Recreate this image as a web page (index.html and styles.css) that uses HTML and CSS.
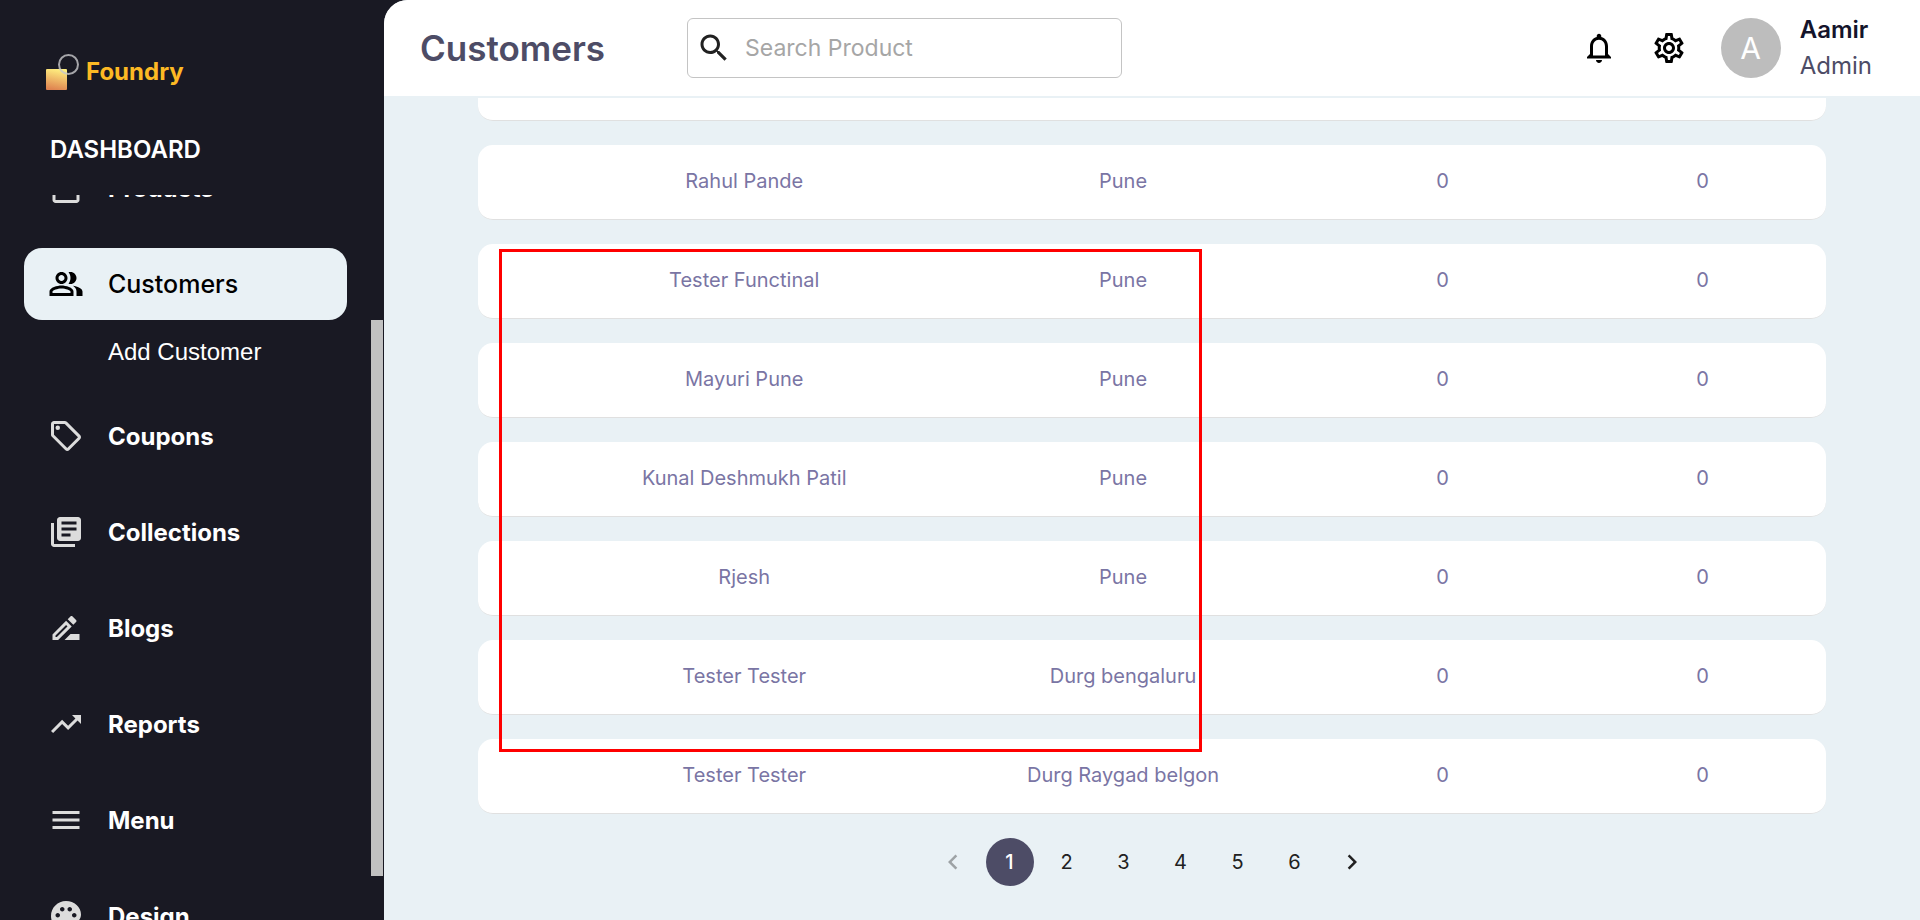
FILE: index.html
```html
<!DOCTYPE html>
<html lang="en">
<head>
<meta charset="utf-8">
<title>Customers</title>
<link rel="stylesheet" href="styles.css">
</head>
<body>
<div class="app">
  <aside class="sidebar">
    <a class="brand" href="#">
      <svg class="brand-mark" viewBox="0 0 36 38" aria-hidden="true">
        <defs><linearGradient id="g" x1="0.6" y1="0" x2="0.4" y2="1"><stop offset="0" stop-color="#fff080"/><stop offset="1" stop-color="#df8350"/></linearGradient></defs>
        <rect x="0" y="16" width="21" height="21" rx="1" fill="url(#g)"/>
        <circle cx="22.5" cy="11.5" r="9.5" fill="none" stroke="#c8c8ca" stroke-opacity="0.8" stroke-width="2"/>
      </svg>
      <span>Foundry</span>
    </a>
    <h2 class="side-title">DASHBOARD</h2>
    <div class="nav-scroller">
      <nav class="nav">
        <a class="nav-item" href="#"><svg class="icon" viewBox="0 0 24 24"><path d="M20 2H4c-1 0-2 .9-2 2v3.01c0 .72.43 1.34 1 1.69V20c0 1.1 1.1 2 2 2h14c.9 0 2-.9 2-2V8.7c.57-.35 1-.97 1-1.69V4c0-1.1-1-2-2-2zm-1 18H5V9h14v11zm1-13H4V4h16v3z"/><path d="M9 12h6v2H9z"/></svg><span>Products</span></a>
        <div class="nav-group">
          <a class="nav-item active" href="#"><svg class="icon" viewBox="0 0 24 24"><path d="M16.67 13.13C18.04 14.06 19 15.32 19 17v3h4v-3c0-2.18-3.57-3.47-6.33-3.87zM15 12c2.21 0 4-1.79 4-4s-1.79-4-4-4c-.47 0-.91.1-1.33.24C14.5 5.27 15 6.58 15 8s-.5 2.73-1.33 3.76c.42.14.86.24 1.33.24zM9 12c2.21 0 4-1.79 4-4s-1.79-4-4-4-4 1.79-4 4 1.79 4 4 4zm0-6c1.1 0 2 .9 2 2s-.9 2-2 2-2-.9-2-2 .9-2 2-2zM9 13c-2.67 0-8 1.34-8 4v3h16v-3c0-2.66-5.33-4-8-4zm6 5H3v-.99C3.2 16.29 6.3 15 9 15s5.8 1.29 6 2v1z"/></svg><span>Customers</span></a>
          <a class="sub-item" href="#">Add Customer</a>
        </div>
        <a class="nav-item" href="#"><svg class="icon" viewBox="0 0 24 24"><path d="M21.41 11.41l-8.83-8.83c-.37-.37-.88-.58-1.41-.58H4c-1.1 0-2 .9-2 2v7.17c0 .53.21 1.04.59 1.41l8.83 8.83c.78.78 2.05.78 2.83 0l7.17-7.17c.78-.78.78-2.04-.01-2.83zM12.83 20L4 11.17V4h7.17L20 12.83 12.83 20z"/><circle cx="6.5" cy="6.5" r="1.5"/></svg><span>Coupons</span></a>
        <a class="nav-item" href="#"><svg class="icon" viewBox="0 0 24 24"><path d="M4 6H2v14c0 1.1.9 2 2 2h14v-2H4V6zm16-4H8c-1.1 0-2 .9-2 2v12c0 1.1.9 2 2 2h12c1.1 0 2-.9 2-2V4c0-1.1-.9-2-2-2zm-1 9H9V9h10v2zm-4 4H9v-2h6v2zm4-8H9V5h10v2z"/></svg><span>Collections</span></a>
        <a class="nav-item" href="#"><svg class="icon" viewBox="0 0 24 24"><path d="M15 16l-4 4h10v-4zM12.06 7.19L3 16.25V20h3.75l9.06-9.06-3.75-3.75zM5.92 18H5v-.92l7.06-7.06.92.92L5.92 18zM18.71 8.04c.39-.39.39-1.02 0-1.41l-2.34-2.34c-.2-.2-.45-.29-.71-.29s-.51.1-.7.29l-1.83 1.83 3.75 3.75 1.83-1.83z"/></svg><span>Blogs</span></a>
        <a class="nav-item" href="#"><svg class="icon" viewBox="0 0 24 24"><path d="M16 6l2.29 2.29-4.88 4.88-4-4L2 16.59 3.41 18l6-6 4 4 6.3-6.29L22 12V6z"/></svg><span>Reports</span></a>
        <a class="nav-item" href="#"><svg class="icon" viewBox="0 0 24 24"><path d="M3 18h18v-2H3v2zm0-5h18v-2H3v2zm0-7v2h18V6H3z"/></svg><span>Menu</span></a>
        <a class="nav-item" href="#"><svg class="icon" viewBox="0 0 24 24"><path d="M12 2C6.49 2 2 6.49 2 12s4.49 10 10 10c1.38 0 2.5-1.12 2.5-2.5 0-.61-.23-1.2-.64-1.67-.08-.1-.13-.21-.13-.33 0-.28.22-.5.5-.5H16c3.31 0 6-2.69 6-6 0-4.96-4.49-9-10-9zm5.5 11c-.83 0-1.5-.67-1.5-1.5s.67-1.5 1.5-1.5 1.5.67 1.5 1.5-.67 1.5-1.5 1.5zm-3-4c-.83 0-1.5-.67-1.5-1.5S13.67 6 14.5 6s1.5.67 1.5 1.5S15.33 9 14.5 9zM5 11.5c0-.83.67-1.5 1.5-1.5s1.5.67 1.5 1.5S7.33 13 6.5 13 5 12.33 5 11.5zm6-4c0 .83-.67 1.5-1.5 1.5S8 8.33 8 7.5 8.67 6 9.5 6s1.5.67 1.5 1.5z"/></svg><span>Design</span></a>
      </nav>
      <div class="scroll-track"><div class="scroll-thumb"></div></div>
    </div>
  </aside>

  <main class="main">
    <header class="topbar">
      <h1 class="page-title">Customers</h1>
      <label class="search">
        <svg class="icon" viewBox="0 0 24 24" aria-hidden="true"><path d="M15.5 14h-.79l-.28-.27C15.41 12.59 16 11.11 16 9.5 16 5.91 13.09 3 9.5 3S3 5.91 3 9.5 5.91 16 9.5 16c1.61 0 3.09-.59 4.23-1.57l.27.28v.79l5 4.99L20.49 19l-4.99-5zm-6 0C7.01 14 5 11.99 5 9.5S7.01 5 9.5 5 14 7.01 14 9.5 11.99 14 9.5 14z"/></svg>
        <input class="search-input" type="text" placeholder="Search Product" aria-label="Search Product">
      </label>
      <div class="tools">
        <button class="icon-button" type="button" aria-label="Notifications"><svg class="icon" viewBox="0 0 24 24"><path d="M12 22c1.1 0 2-.9 2-2h-4c0 1.1.9 2 2 2zm6-6v-5c0-3.07-1.63-5.64-4.5-6.32V4c0-.83-.67-1.5-1.5-1.5s-1.5.67-1.5 1.5v.68C7.64 5.36 6 7.92 6 11v5l-2 2v1h16v-1l-2-2zm-2 1H8v-6c0-2.48 1.51-4.5 4-4.5s4 2.02 4 4.5v6z"/></svg></button>
        <button class="icon-button" type="button" aria-label="Settings"><svg class="icon" viewBox="0 0 24 24"><path d="M19.43 12.98c.04-.32.07-.64.07-.98 0-.34-.03-.66-.07-.98l2.11-1.65c.19-.15.24-.42.12-.64l-2-3.46c-.09-.16-.26-.25-.44-.25-.06 0-.12.01-.17.03l-2.49 1c-.52-.4-1.08-.73-1.69-.98l-.38-2.65C14.46 2.18 14.25 2 14 2h-4c-.25 0-.46.18-.49.42l-.38 2.65c-.61.25-1.17.59-1.69.98l-2.49-1c-.06-.02-.12-.03-.18-.03-.17 0-.34.09-.43.25l-2 3.46c-.13.22-.07.49.12.64l2.11 1.65c-.04.32-.07.65-.07.98 0 .33.03.66.07.98l-2.11 1.65c-.19.15-.24.42-.12.64l2 3.46c.09.16.26.25.44.25.06 0 .12-.01.17-.03l2.49-1c.52.4 1.08.73 1.69.98l.38 2.65c.03.24.24.42.49.42h4c.25 0 .46-.18.49-.42l.38-2.65c.61-.25 1.17-.59 1.69-.98l2.49 1c.06.02.12.03.18.03.17 0 .34-.09.43-.25l2-3.46c.12-.22.07-.49-.12-.64l-2.11-1.65zm-1.98-1.71c.04.31.05.52.05.73 0 .21-.02.43-.05.73l-.14 1.13.89.7 1.08.84-.7 1.21-1.27-.51-1.04-.42-.9.68c-.43.32-.84.56-1.25.73l-1.06.43-.16 1.13-.2 1.35h-1.4l-.19-1.35-.16-1.13-1.06-.43c-.43-.18-.83-.41-1.23-.71l-.91-.7-1.06.43-1.27.51-.7-1.21 1.08-.84.89-.7-.14-1.13c-.03-.31-.05-.54-.05-.74s.02-.43.05-.73l.14-1.13-.89-.7-1.08-.84.7-1.21 1.27.51 1.04.42.9-.68c.43-.32.84-.56 1.25-.73l1.06-.43.16-1.13.2-1.35h1.39l.19 1.35.16 1.13 1.06.43c.43.18.83.41 1.23.71l.91.7 1.06-.43 1.27-.51.7 1.21-1.07.85-.89.7.14 1.13zM12 8c-2.21 0-4 1.79-4 4s1.79 4 4 4 4-1.79 4-4-1.79-4-4-4zm0 6c-1.1 0-2-.9-2-2s.9-2 2-2 2 .9 2 2-.9 2-2 2z"/></svg></button>
      </div>
      <div class="profile">
        <div class="avatar">A</div>
        <div class="profile-text">
          <div class="profile-name">Aamir</div>
          <div class="profile-role">Admin</div>
        </div>
      </div>
    </header>

    <section class="content">
      <table class="customers">
        <colgroup><col class="col-lead"><col class="col-name"><col class="col-city"><col class="col-orders"><col class="col-spent"></colgroup>
        <tbody>
          <tr><td></td><td></td><td></td><td></td><td></td></tr>
          <tr><td></td><td>Rahul Pande</td><td>Pune</td><td>0</td><td>0</td></tr>
          <tr><td></td><td>Tester Functinal</td><td>Pune</td><td>0</td><td>0</td></tr>
          <tr><td></td><td>Mayuri Pune</td><td>Pune</td><td>0</td><td>0</td></tr>
          <tr><td></td><td>Kunal Deshmukh Patil</td><td>Pune</td><td>0</td><td>0</td></tr>
          <tr><td></td><td>Rjesh</td><td>Pune</td><td>0</td><td>0</td></tr>
          <tr><td></td><td>Tester Tester</td><td>Durg bengaluru</td><td>0</td><td>0</td></tr>
          <tr><td></td><td>Tester Tester</td><td>Durg Raygad belgon</td><td>0</td><td>0</td></tr>
        </tbody>
      </table>
      <nav class="pagination" aria-label="Pages">
        <button class="page" type="button" disabled aria-label="Previous page"><svg class="page-arrow" viewBox="0 0 24 24"><path d="M15.41 7.41L14 6l-6 6 6 6 1.41-1.41L10.83 12z"/></svg></button>
        <button class="page current" type="button" aria-current="page">1</button>
        <button class="page" type="button">2</button>
        <button class="page" type="button">3</button>
        <button class="page" type="button">4</button>
        <button class="page" type="button">5</button>
        <button class="page" type="button">6</button>
        <button class="page" type="button" aria-label="Next page"><svg class="page-arrow" viewBox="0 0 24 24"><path d="M10 6L8.59 7.41 13.17 12l-4.58 4.59L10 18l6-6z"/></svg></button>
      </nav>
      <div class="highlight"></div>
    </section>
  </main>
</div>
</body>
</html>
```

FILE: styles.css
```css
* {
  box-sizing: border-box;
}

body {
  margin: 0;
  font-family: Inter, "Liberation Sans", sans-serif;
  background: #191923;
}

h1,
h2 {
  margin: 0;
}

a {
  color: inherit;
  text-decoration: none;
}

.app {
  display: grid;
  grid-template-columns: 20% 1fr;
  height: 100vh;
  overflow: hidden;
}

.icon {
  width: 36px;
  height: 36px;
  flex: none;
  fill: currentColor;
}

/* Sidebar */
.sidebar {
  display: flex;
  flex-direction: column;
  min-height: 0;
  color: #fff;
}

.brand {
  display: flex;
  align-items: center;
  gap: 4px;
  padding: 53px 46px 0;
  color: #fdb924;
  font-size: 24px;
  font-weight: 700;
  line-height: 38px;
}

.brand-mark {
  width: 36px;
  height: 38px;
}

.side-title {
  padding: 41px 50px 27px;
  font-size: 24px;
  font-weight: 600;
  line-height: 36px;
}

.nav-scroller {
  display: flex;
  flex: 1;
  min-height: 0;
  padding-right: 1px;
  overflow: hidden;
}

.nav {
  display: flex;
  flex: 1;
  flex-direction: column;
  gap: 24px;
  margin-top: -43px;
  padding: 0 24px;
}

.nav-item {
  display: flex;
  flex: none;
  align-items: center;
  gap: 24px;
  height: 72px;
  padding: 0 24px;
  border-radius: 18px;
  font-size: 24px;
  font-weight: 700;
}

.nav-item .icon {
  color: #dcdcdc;
}

.nav-item.active {
  background: #e9f1f5;
  color: #000;
  font-size: 25px;
  font-weight: 500;
}

.nav-item.active .icon {
  color: #000;
}

.sub-item {
  display: block;
  padding: 14px 84px 6px;
  font-family: "Liberation Sans", Arial, sans-serif;
  font-size: 24px;
  line-height: 36px;
  white-space: nowrap;
}

.scroll-track {
  display: flex;
  width: 12px;
  padding: 125px 0 44px;
}

.scroll-thumb {
  flex: 1;
  background: #c1c1c1;
}

/* Main column */
.main {
  display: flex;
  flex-direction: column;
  min-width: 0;
  min-height: 0;
  overflow: hidden;
  border-top-left-radius: 24px;
  background: #e9f1f5;
}

.topbar {
  display: flex;
  flex: none;
  align-items: center;
  height: 96px;
  margin-bottom: 2px;
  padding: 0 48px 0 36px;
  background: #fff;
}

.page-title {
  width: 267px;
  color: #4d4c66;
  font-size: 35px;
  font-weight: 600;
}

.search {
  display: flex;
  align-items: center;
  gap: 13px;
  width: 435px;
  height: 60px;
  padding: 0 8px;
  border: 1px solid #c4c4c4;
  border-radius: 6px;
  color: #212121;
}

.search-input {
  flex: 1;
  min-width: 0;
  padding: 0;
  border: 0;
  outline: 0;
  background: none;
  color: #212121;
  font: 23px Inter, sans-serif;
}

.search-input::placeholder {
  color: #a6a6a6;
}

.tools {
  display: flex;
  gap: 34px;
  margin-left: auto;
}

.icon-button {
  display: flex;
  padding: 0;
  border: 0;
  background: none;
  color: #000;
}

.profile {
  display: flex;
  align-items: center;
  gap: 19px;
  margin-left: 34px;
}

.avatar {
  width: 60px;
  border-radius: 50%;
  background: #bdbdbd;
  color: #fff;
  font-size: 30px;
  line-height: 60px;
  text-align: center;
}

.profile-text {
  font-size: 24px;
  line-height: 36px;
}

.profile-name {
  color: #14142b;
  font-weight: 600;
}

.profile-role {
  color: #4d4c66;
}

/* Customer list */
.content {
  position: relative;
  display: flex;
  flex: 1;
  flex-direction: column;
  justify-content: flex-end;
  min-height: 0;
  padding: 0 94px 34px;
  overflow: hidden;
}

.customers {
  flex: none;
  width: 100%;
  border-collapse: separate;
  border-spacing: 0 24px;
  table-layout: fixed;
}

.col-lead {
  width: 5.2%;
}

.col-name {
  width: 29.1%;
}

.col-city {
  width: 27.1%;
}

.col-orders {
  width: 20.3%;
}

.col-spent {
  width: 18.3%;
}

.customers td {
  height: 75px;
  padding: 0 0 2px;
  border-bottom: 1px solid #e0e0e0;
  background: #fff;
  color: #7a75a4;
  font-size: 20px;
  text-align: center;
}

.customers td:first-child {
  border-radius: 15px 0 0 15px;
}

.customers td:last-child {
  border-radius: 0 15px 15px 0;
}

.pagination {
  display: flex;
  flex: none;
  justify-content: center;
  gap: 9px;
}

.page {
  display: flex;
  align-items: center;
  justify-content: center;
  width: 48px;
  height: 48px;
  padding: 0;
  border: 0;
  border-radius: 50%;
  background: none;
  color: #212121;
  font: 20px Inter, sans-serif;
}

.page:disabled {
  color: #9da2a5;
}

.page.current {
  background: #4d4c66;
  color: #fff;
  font-weight: 500;
}

.page-arrow {
  width: 30px;
  height: 30px;
  fill: currentColor;
}

/* Marked area drawn over the list */
.highlight {
  position: absolute;
  top: 151px;
  left: 115px;
  width: 703px;
  height: 503px;
  border: 3px solid #f00;
  pointer-events: none;
}
```
